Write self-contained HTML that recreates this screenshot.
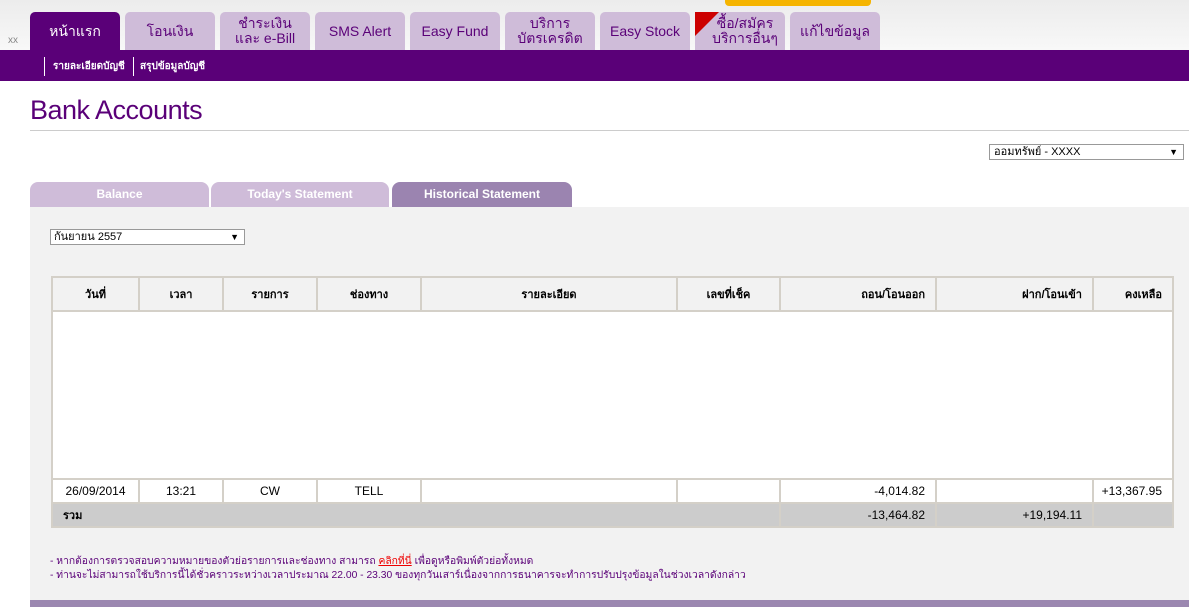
<!DOCTYPE html><html><head><meta charset="utf-8"><style>
*{margin:0;padding:0;box-sizing:border-box}
body{width:1189px;height:607px;overflow:hidden;background:#fff;font-family:"Liberation Sans","Noto Sans CJK SC",sans-serif;position:relative}
.top{position:absolute;left:0;top:0;width:1189px;height:50px;background:linear-gradient(#ececec,#f8f8f8)}
.tab{position:absolute;top:12px;height:38px;width:90px;background:#cfbcd9;border-radius:5px 5px 0 0;color:#5a0078;font-size:14px;text-align:center;display:flex;align-items:center;justify-content:center;line-height:15px}
.bar{position:absolute;left:0;top:50px;width:1189px;height:31px;background:#5a0078}
.abs{position:absolute}
.stab{position:absolute;top:182px;height:25px;color:#fff;font-weight:bold;font-size:12px;text-align:center;line-height:25px;border-radius:8px 8px 0 0}
.panel{position:absolute;left:30px;top:207px;width:1159px;height:393px;background:#f2f2f2}
table{position:absolute;left:51px;top:276px;border-collapse:collapse;font-size:11px;table-layout:fixed;width:1121px}
td{border:2px solid #d4d0c8;padding:0}
</style></head><body>
<div class="top"></div>
<div class="abs" style="left:8px;top:35px;font-size:10px;color:#888">xx</div>
<div class="tab" style="left:30px;background:#5a0078;color:#fff">หน้าแรก</div>
<div class="tab" style="left:125px">โอนเงิน</div>
<div class="tab" style="left:220px">ชำระเงิน<br>และ e-Bill</div>
<div class="tab" style="left:315px">SMS Alert</div>
<div class="tab" style="left:410px">Easy Fund</div>
<div class="tab" style="left:505px">บริการ<br>บัตรเครดิต</div>
<div class="tab" style="left:600px">Easy Stock</div>
<div class="tab" style="left:695px;padding-left:10px">ซื้อ/สมัคร<br>บริการอื่นๆ</div>
<div class="abs" style="left:695px;top:12px;width:0;height:0;border-top:24px solid #c00;border-right:24px solid transparent"></div>
<div class="abs" style="left:725px;top:0;width:146px;height:6px;background:#f5b400;border-radius:0 0 4px 4px"></div>
<div class="tab" style="left:790px">แก้ไขข้อมูล</div>
<div class="bar"></div>
<div class="abs" style="left:44px;top:57px;width:1px;height:19px;background:#fff"></div>
<div class="abs" style="left:53px;top:59px;color:#fff;font-size:10px;font-weight:bold">รายละเอียดบัญชี</div>
<div class="abs" style="left:133px;top:57px;width:1px;height:19px;background:#fff"></div>
<div class="abs" style="left:140px;top:59px;color:#fff;font-size:10px;font-weight:bold">สรุปข้อมูลบัญชี</div>
<div class="abs" style="left:30px;top:95px;font-size:27px;color:#5a0078;letter-spacing:-0.5px">Bank Accounts</div>
<div class="abs" style="left:30px;top:130px;width:1159px;height:1px;background:#ccc"></div>
<div class="abs" style="left:989px;top:144px;width:195px;height:16px;border:1px solid #999;background:#fff;font-size:11px;line-height:14px;padding-left:4px">ออมทรัพย์ - XXXX<span style="position:absolute;right:5px;font-size:9px">▼</span></div>
<div class="stab" style="left:30px;width:179px;background:#cfbcd9">Balance</div>
<div class="stab" style="left:211px;width:178px;background:#cfbcd9">Today's Statement</div>
<div class="stab" style="left:392px;width:180px;background:#9b84b0">Historical Statement</div>
<div class="panel"></div>
<div class="abs" style="left:50px;top:229px;width:195px;height:16px;border:1px solid #999;background:#fff;font-size:11px;line-height:14px;padding-left:3px">กันยายน 2557<span style="position:absolute;right:5px;font-size:9px">▼</span></div>
<table>
<colgroup><col style="width:87px"><col style="width:84px"><col style="width:94px"><col style="width:104px"><col style="width:256px"><col style="width:103px"><col style="width:156px"><col style="width:157px"><col style="width:80px"></colgroup>
<tr style="background:#f2f2f2;font-weight:bold;text-align:center;height:34px"><td>วันที่</td><td>เวลา</td><td>รายการ</td><td>ช่องทาง</td><td>รายละเอียด</td><td>เลขที่เช็ค</td><td style="text-align:right;padding-right:10px">ถอน/โอนออก</td><td style="text-align:right;padding-right:10px">ฝาก/โอนเข้า</td><td style="text-align:right;padding-right:10px">คงเหลือ</td></tr>
<tr style="height:168px"><td colspan="9" style="background:#fff"></td></tr>
<tr style="background:#fff;font-size:12px;text-align:center;height:24px"><td>26/09/2014</td><td>13:21</td><td>CW</td><td>TELL</td><td></td><td></td><td style="text-align:right;padding-right:10px">-4,014.82</td><td></td><td style="text-align:right;padding-right:10px">+13,367.95</td></tr>
<tr style="background:#ccc;font-size:12px;height:24px"><td colspan="6" style="font-weight:bold;font-size:11px;padding-left:10px">รวม</td><td style="text-align:right;padding-right:10px">-13,464.82</td><td style="text-align:right;padding-right:10px">+19,194.11</td><td></td></tr>
</table>
<div class="abs" style="left:50px;top:555px;font-size:10.3px;color:#5a0078;line-height:14px">- หากต้องการตรวจสอบความหมายของตัวย่อรายการและช่องทาง สามารถ <span style="color:#e00;text-decoration:underline">คลิกที่นี่</span> เพื่อดูหรือพิมพ์ตัวย่อทั้งหมด<br>- ท่านจะไม่สามารถใช้บริการนี้ได้ชั่วคราวระหว่างเวลาประมาณ 22.00 - 23.30 ของทุกวันเสาร์เนื่องจากการธนาคารจะทำการปรับปรุงข้อมูลในช่วงเวลาดังกล่าว</div>
<div class="abs" style="left:30px;top:600px;width:1159px;height:7px;background:#9b87b0"></div>
</body></html>
